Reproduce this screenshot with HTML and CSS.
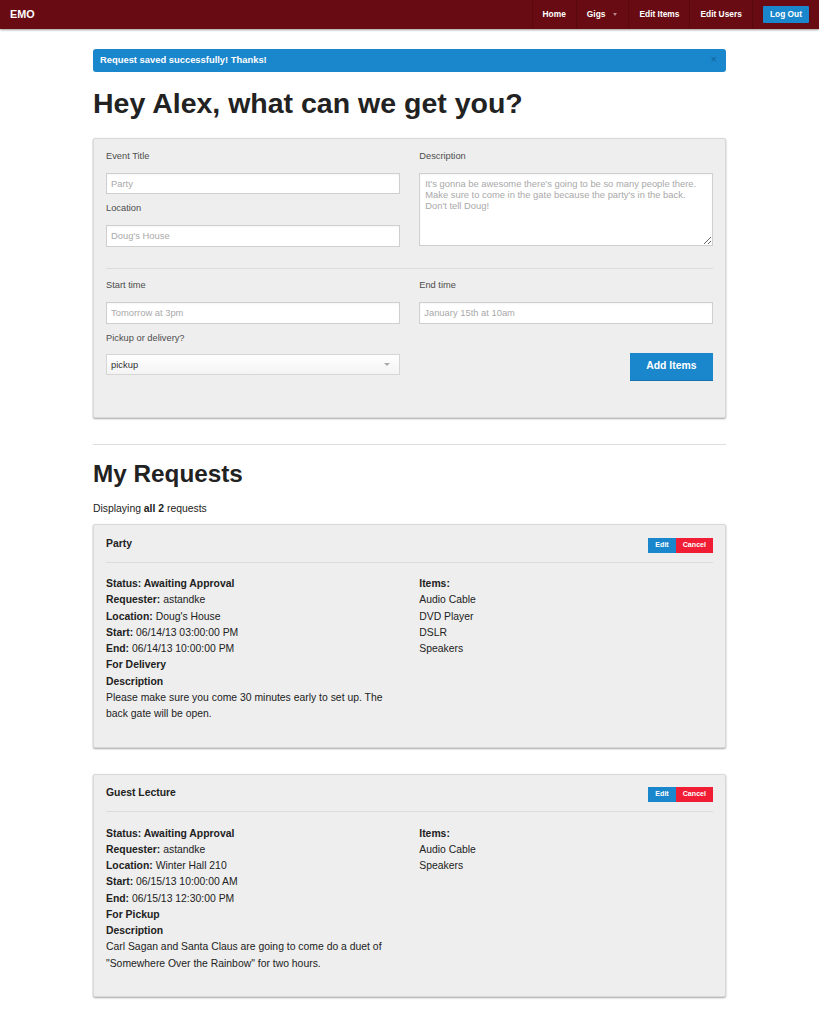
FILE: index.html
```html
<!DOCTYPE html>
<html lang="en">
<head>
<meta charset="utf-8">
<title>EMO</title>
<link rel="stylesheet" href="styles.css">
</head>
<body>
<nav class="topbar">
  <div class="brand">EMO</div>
  <ul class="nav">
    <li class="nav-item"><a>Home</a></li>
    <li class="nav-item"><a class="has-dropdown">Gigs<span class="caret"></span></a></li>
    <li class="nav-item"><a>Edit Items</a></li>
    <li class="nav-item"><a>Edit Users</a></li>
    <li class="nav-btn"><a class="btn-logout">Log Out</a></li>
  </ul>
</nav>

<main class="container">
  <div class="alert"><span>Request saved successfully! Thanks!</span><span class="close">&times;</span></div>

  <h1 class="page-title">Hey Alex, what can we get you?</h1>

  <form class="panel form-grid">
    <div class="col">
      <label class="field-label">Event Title</label>
      <input class="field" type="text" placeholder="Party">
      <label class="field-label">Location</label>
      <input class="field" type="text" placeholder="Doug's House">
    </div>
    <div class="col">
      <label class="field-label">Description</label>
      <textarea class="field-area" placeholder="It's gonna be awesome there's going to be so many people there. Make sure to come in the gate because the party's in the back. Don't tell Doug!"></textarea>
    </div>

    <hr class="form-hr">

    <div class="col">
      <label class="field-label">Start time</label>
      <input class="field" type="text" placeholder="Tomorrow at 3pm">
    </div>
    <div class="col">
      <label class="field-label">End time</label>
      <input class="field" type="text" placeholder="January 15th at 10am">
    </div>

    <div class="col">
      <label class="field-label">Pickup or delivery?</label>
      <div class="select"><span>pickup</span><span class="select-arrow"></span></div>
    </div>
    <div class="col actions">
      <button class="btn-primary" type="button">Add Items</button>
    </div>
  </form>

  <hr class="section-hr">

  <h2 class="section-title">My Requests</h2>
  <p class="count">Displaying <b>all&nbsp;2</b> requests</p>

  <section class="card">
    <div class="card-head">
      <h5 class="card-title">Party</h5>
      <div class="card-actions"><a class="btn-sm btn-edit">Edit</a><a class="btn-sm btn-cancel">Cancel</a></div>
    </div>
    <hr class="card-hr">
    <div class="card-body">
      <div>
        <p><b>Status: Awaiting Approval</b></p>
        <p><b>Requester:</b> astandke</p>
        <p><b>Location:</b> Doug's House</p>
        <p><b>Start:</b> 06/14/13 03:00:00 PM</p>
        <p><b>End:</b> 06/14/13 10:00:00 PM</p>
        <p><b>For Delivery</b></p>
        <p><b>Description</b></p>
        <p>Please make sure you come 30 minutes early to set up. The back gate will be open.</p>
      </div>
      <div>
        <p><b>Items:</b></p>
        <p>Audio Cable</p>
        <p>DVD Player</p>
        <p>DSLR</p>
        <p>Speakers</p>
      </div>
    </div>
  </section>

  <section class="card">
    <div class="card-head">
      <h5 class="card-title">Guest Lecture</h5>
      <div class="card-actions"><a class="btn-sm btn-edit">Edit</a><a class="btn-sm btn-cancel">Cancel</a></div>
    </div>
    <hr class="card-hr">
    <div class="card-body">
      <div>
        <p><b>Status: Awaiting Approval</b></p>
        <p><b>Requester:</b> astandke</p>
        <p><b>Location:</b> Winter Hall 210</p>
        <p><b>Start:</b> 06/15/13 10:00:00 AM</p>
        <p><b>End:</b> 06/15/13 12:30:00 PM</p>
        <p><b>For Pickup</b></p>
        <p><b>Description</b></p>
        <p>Carl Sagan and Santa Claus are going to come do a duet of "Somewhere Over the Rainbow" for two hours.</p>
      </div>
      <div>
        <p><b>Items:</b></p>
        <p>Audio Cable</p>
        <p>Speakers</p>
      </div>
    </div>
  </section>
</main>
</body>
</html>
```

FILE: styles.css
```css
html, body {
  margin: 0;
  padding: 0;
}

body {
  font-family: "Liberation Sans", Arial, Helvetica, sans-serif;
  color: #222;
  background: #fff;
}

/* ---------- Top bar ---------- */
.topbar {
  height: 29px;
  background: #690b12;
  display: flex;
  justify-content: space-between;
  box-shadow: 0 1px 2px rgba(0, 0, 0, 0.4);
  position: relative;
  z-index: 2;
}

.brand {
  padding-left: 10px;
  line-height: 29px;
  font-size: 10.8px;
  font-weight: bold;
  color: #fff;
}

.nav {
  list-style: none;
  margin: 0;
  padding: 0;
  display: flex;
}

.nav-item {
  border-left: 1px solid #580910;
}

.nav-item a {
  display: flex;
  align-items: center;
  padding: 0 10px;
  line-height: 29px;
  font-size: 8.4px;
  font-weight: bold;
  color: #fff;
}

.caret {
  display: inline-block;
  width: 0;
  height: 0;
  margin-left: 8px;
  margin-right: 1px;
  border-left: 2.6px solid transparent;
  border-right: 2.6px solid transparent;
  border-top: 3px solid rgba(255, 255, 255, 0.5);
}

.nav-btn {
  border-left: 1px solid #580910;
  padding: 0 10px;
  display: flex;
  align-items: center;
}

.btn-logout {
  display: block;
  background: #1a86cb;
  color: #fff;
  font-size: 8.4px;
  font-weight: bold;
  line-height: 17.4px;
  padding: 0 7px;
  border-radius: 1px;
}

/* ---------- Layout ---------- */
.container {
  width: 633px;
  margin: 0 auto;
  padding-top: 20.3px;
  padding-bottom: 40px;
}

.alert {
  display: flex;
  justify-content: space-between;
  background: #1a86cb;
  color: #fff;
  font-size: 9.4px;
  font-weight: bold;
  line-height: 22.7px;
  padding: 0 7px;
  border-radius: 3px;
}

.alert .close {
  color: #12649c;
  font-size: 11px;
  font-weight: normal;
  line-height: 20px;
  margin-right: 2px;
}

.page-title {
  font-size: 28.5px;
  line-height: 34.2px;
  font-weight: bold;
  margin: 13.6px 0 18.2px;
  color: #222;
}

/* ---------- Panel / form ---------- */
.panel {
  background: #eee;
  border: 1px solid #d8d8d8;
  border-radius: 2px;
  box-shadow: 0 1px 2px rgba(0, 0, 0, 0.35);
  padding: 13px 12px 13px;
}

.form-grid {
  display: grid;
  grid-template-columns: 1fr 1fr;
  column-gap: 19.5px;
  align-items: start;
}

.field-label {
  display: block;
  font-size: 9.3px;
  line-height: 9.3px;
  color: #4d4d4d;
  margin-bottom: 11.4px;
}

.field,
.field-area {
  display: block;
  width: 100%;
  box-sizing: border-box;
  border: 1px solid #cfcfcf;
  background: #fff;
  font-family: "Liberation Sans", Arial, Helvetica, sans-serif;
  font-size: 9.4px;
  color: #333;
  margin: 0 0 10px;
  outline: none;
  box-shadow: inset 0 1px 2px rgba(0, 0, 0, 0.04);
  border-radius: 0;
}

.field {
  height: 21.7px;
  padding: 0 4px;
}

.field-area {
  height: 73px;
  padding: 4px 5px;
  line-height: 11.2px;
}

.field::placeholder,
.field-area::placeholder {
  color: #a9a9a9;
  opacity: 1;
}

.form-hr {
  grid-column: 1 / -1;
  border: 0;
  border-top: 1px solid #dcdcdc;
  height: 0;
  margin: 11.5px 0 12px;
}

.select {
  display: flex;
  align-items: center;
  justify-content: space-between;
  box-sizing: border-box;
  height: 20.5px;
  border: 1px solid #d6d6d6;
  background: linear-gradient(#ffffff, #f3f3f3);
  padding: 0 9px 0 4px;
  font-size: 9.4px;
  color: #333;
  margin-bottom: 10px;
}

.select-arrow {
  width: 0;
  height: 0;
  border-left: 3px solid transparent;
  border-right: 3px solid transparent;
  border-top: 3.5px solid #aaa;
}

.actions {
  display: flex;
  justify-content: flex-end;
  padding-top: 19.6px;
  padding-bottom: 23.3px;
}

.btn-primary {
  display: block;
  height: 27.7px;
  padding: 0 16.5px;
  border: 0;
  border-bottom: 1px solid #1571b0;
  background: #1a86cb;
  color: #fff;
  font-family: "Liberation Sans", Arial, Helvetica, sans-serif;
  font-size: 10.4px;
  font-weight: bold;
  line-height: 26.7px;
  cursor: pointer;
}

/* ---------- Requests ---------- */
.section-hr {
  border: 0;
  border-top: 1px solid #dedede;
  height: 0;
  margin: 25.7px 0 17px;
}

.section-title {
  font-size: 24.3px;
  line-height: 24px;
  font-weight: bold;
  margin: 0 0 14.7px;
}

.count {
  font-size: 10.4px;
  line-height: 16.25px;
  margin: 0 0 7.1px;
}

.card {
  background: #eee;
  border: 1px solid #d8d8d8;
  border-radius: 2px;
  box-shadow: 0 1px 2px rgba(0, 0, 0, 0.35);
  padding: 12.7px 12px 24.5px;
  margin-bottom: 25.7px;
}

.card-head {
  display: flex;
  justify-content: space-between;
  align-items: flex-start;
  height: 15px;
}

.card-title {
  margin: 0;
  padding-top: 1px;
  font-size: 10.4px;
  line-height: 10px;
  font-weight: bold;
  color: #222;
}

.card-actions {
  display: flex;
}

.btn-sm {
  display: block;
  font-size: 7.1px;
  font-weight: bold;
  line-height: 15px;
  padding: 0 7px;
  color: #fff;
}

.btn-edit {
  background: #1a86cb;
}

.btn-cancel {
  background: #f01d35;
}

.card-hr {
  border: 0;
  border-top: 1px solid #dcdcdc;
  height: 0;
  margin: 9px 0 13.5px;
}

.card-body {
  display: grid;
  grid-template-columns: 1fr 1fr;
  column-gap: 19.5px;
  font-size: 10.4px;
  line-height: 16.25px;
}

.card-body p {
  margin: 0;
}
```
